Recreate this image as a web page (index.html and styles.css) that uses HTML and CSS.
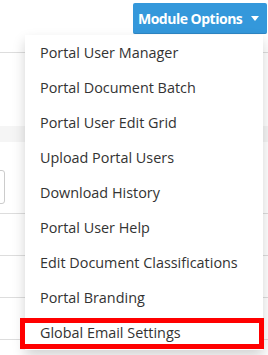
FILE: index.html
```html
<!DOCTYPE html>
<html lang="en">
<head>
    <meta charset="UTF-8">
    <meta name="viewport" content="width=device-width, initial-scale=1.0">
    <title>Module Options</title>
    <link rel="stylesheet" href="styles.css">
</head>
<body>

    <div class="toolbar">
        <div class="module-options">
            <button class="btn btn-blue"><span class="btn-label">Module Options</span><span class="caret"></span></button>

            <ul class="dropdown-menu">
                <li><a href="#">Portal User Manager</a></li>
                <li><a href="#">Portal Document Batch</a></li>
                <li><a href="#">Portal User Edit Grid</a></li>
                <li><a href="#">Upload Portal Users</a></li>
                <li><a href="#">Download History</a></li>
                <li><a href="#">Portal User Help</a></li>
                <li><a href="#">Edit Document Classifications</a></li>
                <li><a href="#">Portal Branding</a></li>
                <li class="marked"><a href="#">Global Email Settings</a></li>
            </ul>
        </div>
    </div>

    <div class="page">
        <div class="spacer"></div>
        <div class="band"></div>
        <div class="row row-input">
            <div class="input-box"></div>
        </div>
        <div class="row"></div>
        <div class="row"></div>
        <div class="row"></div>
    </div>

</body>
</html>
```

FILE: styles.css
```css
body {
    margin: 0;
    font-family: "Open Sans", Arial, sans-serif;
    background-color: #fff;
    width: 268px;
    min-height: 355px;
    overflow: hidden;
}
.toolbar {
    height: 52px;
    border-bottom: 1px solid #ddd;
    display: flex;
    justify-content: flex-end;
}
.module-options {
    position: relative;
    margin-top: 3px;
    margin-right: 1px;
}
.btn {
    width: 134px;
    height: 31px;
    padding: 0 8px 0 5px;
    font-family: "Open Sans", Arial, sans-serif;
    font-size: 14px;
    font-weight: 700;
    color: #fff;
    border: none;
    border-radius: 2px;
    display: flex;
    align-items: center;
    justify-content: space-between;
}
.btn-label {
    letter-spacing: -0.5px;
}
.btn-blue {
    background-color: #3498db;
    border-bottom: 1px solid #2d86c4;
}
.caret {
    width: 0;
    height: 0;
    border-left: 4.5px solid transparent;
    border-right: 4.5px solid transparent;
    border-top: 5px solid #fff;
}
.dropdown-menu {
    position: absolute;
    top: 32px;
    right: 4px;
    width: 238px;
    margin: 0;
    padding: 0;
    list-style: none;
    background: #fff;
    box-shadow: 0 6px 12px rgba(0, 0, 0, 0.175);
    z-index: 10;
}
.dropdown-menu li {
    height: 35px;
    position: relative;
}
.dropdown-menu a {
    display: block;
    padding: 0 15px;
    line-height: 35px;
    font-size: 14.4px;
    color: #333;
    text-decoration: none;
    white-space: nowrap;
}
.marked::after {
    content: "";
    position: absolute;
    left: -5px;
    right: -1px;
    top: 3px;
    bottom: 1px;
    border: 5px solid #f00;
    box-sizing: border-box;
}
.page {
    display: flex;
    flex-direction: column;
}
.spacer {
    height: 73px;
}
.band {
    height: 16px;
    background-color: #f5f5f5;
}
.row {
    height: 41px;
    border-bottom: 1px solid #ddd;
}
.row-input {
    height: 71px;
    display: flex;
    align-items: flex-start;
}
.input-box {
    margin-top: 28px;
    margin-left: -10px;
    width: 13px;
    height: 32px;
    border: 1px solid #ccc;
    border-radius: 3px;
}
```
